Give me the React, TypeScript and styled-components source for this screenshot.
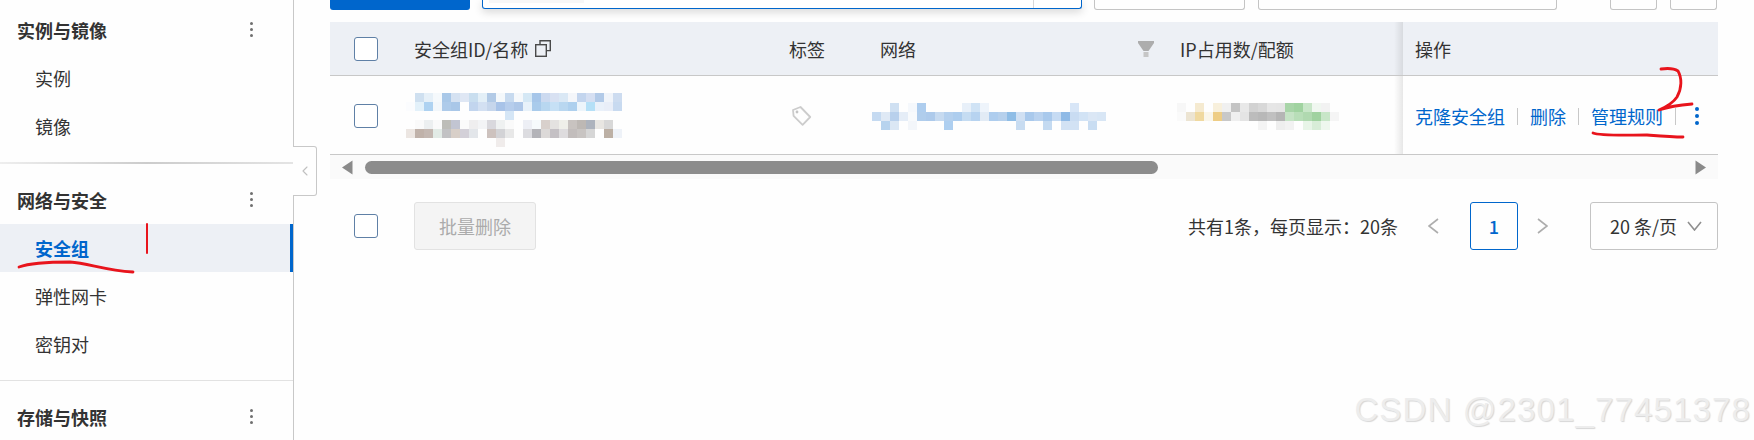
import React from 'react';
import styled, { createGlobalStyle } from 'styled-components';
import { ChevronLeft } from 'lucide-react';

const BLUE = '#0066cc';
const TEXT = '#333333';

const GlobalStyle = createGlobalStyle`
  html, body {
    margin: 0;
    background: #fefefe;
    overflow: hidden;
  }
  * {
    box-sizing: border-box;
  }
`;

// pixelated (blurred out) values, one string per row of 9px cells
const ID_CELLS = [
  '- cfe0f0 e6f0f8 f5f9fc a9c8e8 d5e2f2 dfe7f4 c9deef e3eff7 b2cae6 f4f8fb c7daef f5f8fb d5e8f5 a6c6e9 ccdaf0 d8e1f2 dae8f5 f4f6fa c3d5ee d5dff2 b2cae8 f0f4fa cddcf0',
  'fbfcfe e3f1fa aed2f1 f2f7fb aecbea a9c7e8 - c2d5ee d3e0f2 c6d6ec a8c3e8 b6cdec aec7e8 e8f2fa a9cbeb b8d7f0 c6e0f5 b9d7f0 aed0ee edf5fb b5e0f7 eaf1fa e9eef8 c8daf0',
  '- - - - - - - - - - - d5e6f6',
  '- fafafa eceff0 fafafa bdbdb8 c2c5d2 fbfbfb efeeef f3f4f6 d9d8dd eff1f1 fafafa - edeff5 f6fafc d8d0cc e4e2e0 efefe9 c8c3c0 bdb8b4 adb3bd e8e6e2 d8d8d8',
  'ece6e2 c0b2aa c4b8b2 e2ebe6 c2c2c4 d8cfc8 d3d0d8 e3e6ea - cdc2be d3d3d6 e8e8e8 - dcdce0 b3b3b8 dcd9d8 c4c0c4 dedcde c2bdbc c8c4c2 d6d6d6 - bcb0a5 eef2f8',
  '- - - - - - - - - - f0eceb',
];

const NET_CELLS = [
  '- - cfe0f2 - f5f8fc aecdee - - - - e8f0f9 d0e3f5 eef4fb - - - - - - - - - d8e6f7',
  'c5daf1 dfe9f5 b8d0ec e5edf7 f8fafc b0cdec adcaeb c6daf0 b4d0ee adcdee c5dcf2 b7d3f0 e2ebf5 aecdee b6d0ec 8fbde6 d0e0f3 a9c9ec b9d2ef a9c9ec c6dbf3 8fbae6 c9dcf2 d2e3f5 dbe7f5 d8e6f5',
  '- b7d3ee dbe7f4 - f3f6fa - - - aecff0 - - - - - - - c8dcf1 - - c4daf1 - d2e2f4 d2e2f4 - c9ddf2',
];

const IP_CELLS = [
  'f7f7f7 - f5ead0 - f8f0dc f0f0f0 c4c4c4 e8e8e8 d2d2d2 d8d8d8 e6e6e6 e5e5e5 a8d5a8 a0d3a0 c8e6c8 f0f7f0 f2f2f2',
  'fafafa ece4d2 f0d9a0 faf6ea eecd85 c8c8c8 efefef e4e4e4 bcbcbc b8b8b8 c0c0c0 b5b5b5 c5e3c5 b8deb8 b0d9b0 a0d2a0 c8e6c8 f5f5f5',
  '- - - - - - - - - f4f4f4 - eeeeee f2f2f2 - e8f5e8 d8edd8 eef7ee',
];

const Mosaic = ({ rows }: { rows: string[] }) => {
  const grid = rows.map((row) => row.split(' '));
  const cols = Math.max(...grid.map((row) => row.length));
  return (
    <MosaicSvg width={cols * 9} height={grid.length * 9}>
      {grid.map((row, y) =>
        row.map((cell, x) =>
          cell === '-' ? null : (
            <rect key={`${x}-${y}`} x={x * 9} y={y * 9} width={9} height={9} fill={`#${cell}`} />
          ),
        ),
      )}
    </MosaicSvg>
  );
};

const MoreDots = ({ blue }: { blue?: boolean }) => (
  <DotsColumn $blue={blue}>
    <i />
    <i />
    <i />
  </DotsColumn>
);

const CopyIcon = () => (
  <HeaderIcon width="16" height="17" viewBox="0 0 16 17" fill="none" stroke="#4a4a4a" strokeWidth="1.4">
    <rect x="0.7" y="4.7" width="10.6" height="11.6" />
    <path d="M5 4.4V0.7H15.3V10.6H11.6" />
  </HeaderIcon>
);

const FilterIcon = () => (
  <FilterSvg width="16" height="16" viewBox="0 0 16 16">
    <path d="M0 0H16V2L10.5 10H5.5L0 2Z" fill="#adadad" />
    <rect x="5.5" y="11" width="5" height="5" fill="#c6c6c6" />
  </FilterSvg>
);

const TagIcon = () => (
  <svg width="20" height="20" viewBox="0 0 20 20" fill="none" stroke="#cccccc" strokeWidth="1.8" strokeLinejoin="round">
    <path d="M1 4L8.5 1L18.2 11L10.6 18.8L1.6 9.8Z" />
    <circle cx="5" cy="6" r="1.4" fill="#c4c4c4" stroke="none" />
  </svg>
);

const Triangle = ({ right }: { right?: boolean }) => (
  <svg width="11" height="15" viewBox="0 0 11 15" fill="#8a8a8a">
    <path d={right ? 'M0.5 0.5L11 7.5L0.5 14.5Z' : 'M10.5 0.5L0 7.5L10.5 14.5Z'} />
  </svg>
);

const PagerChevron = ({ right }: { right?: boolean }) => (
  <svg width="11" height="16" viewBox="0 0 11 16" fill="none" stroke="#adadad" strokeWidth="1.6">
    <path d={right ? 'M1 1L10 8L1 15' : 'M10 1L1 8L10 15'} />
  </svg>
);

const SelectChevron = () => (
  <svg width="15" height="10" viewBox="0 0 15 10" fill="none" stroke="#8f8f8f" strokeWidth="1.6">
    <path d="M1 1L7.5 9L14 1" />
  </svg>
);

const NAV_TOP = ['实例', '镜像'];
const NAV_NET = ['安全组', '弹性网卡', '密钥对'];

export default function App() {
  return (
    <Page>
      <GlobalStyle />
      <Sidebar>
        <NavTitle>
          实例与镜像
          <MoreDots />
        </NavTitle>
        {NAV_TOP.map((item) => (
          <NavItem key={item}>{item}</NavItem>
        ))}
        <NavDivider $strong />
        <NavTitle>
          网络与安全
          <MoreDots />
        </NavTitle>
        {NAV_NET.map((item) => (
          <NavItem key={item} $active={item === '安全组'}>
            {item}
          </NavItem>
        ))}
        <NavDivider />
        <NavTitle>
          存储与快照
          <MoreDots />
        </NavTitle>
        <CollapseTab>
          <ChevronLeft size={16} color="#c0c0c0" strokeWidth={1.6} />
        </CollapseTab>
      </Sidebar>

      <Main>
        <Toolbar>
          <PrimaryButton />
          <SearchBox>
            <SearchHint />
            <SearchAddon />
          </SearchBox>
          <ToolBox $width={151} />
          <ToolBox $width={299} $gap={13} />
          <ToolBox $width={47} $gap={53} />
          <ToolBox $width={47} $gap={13} />
        </Toolbar>

        <Table>
          <HeaderRow>
            <CheckCell>
              <Checkbox />
            </CheckCell>
            <IdCell>
              安全组ID/名称
              <CopyIcon />
            </IdCell>
            <TagCell>标签</TagCell>
            <NetCell>
              网络
              <FilterIcon />
            </NetCell>
            <IpCell>IP占用数/配额</IpCell>
            <OpsCell $head>操作</OpsCell>
          </HeaderRow>
          <BodyRow>
            <CheckCell>
              <Checkbox />
            </CheckCell>
            <IdCell $mosaic>
              <Mosaic rows={ID_CELLS} />
            </IdCell>
            <TagCell>
              <TagNudge>
                <TagIcon />
              </TagNudge>
            </TagCell>
            <NetCell $mosaic>
              <Mosaic rows={NET_CELLS} />
            </NetCell>
            <IpCell $mosaic>
              <Mosaic rows={IP_CELLS} />
            </IpCell>
            <OpsCell>
              <ActionLink>克隆安全组</ActionLink>
              <ActionSep />
              <ActionLink>删除</ActionLink>
              <ActionSep />
              <ActionLink>管理规则</ActionLink>
              <ActionSep />
              <MoreDots blue />
            </OpsCell>
          </BodyRow>
          <ScrollTrack>
            <Triangle />
            <ScrollThumb />
            <Triangle right />
          </ScrollTrack>
        </Table>

        <Pager>
          <PagerCheck>
            <Checkbox />
          </PagerCheck>
          <BatchButton>批量删除</BatchButton>
          <PagerTotal>共有1条，每页显示：20条</PagerTotal>
          <PagerArrow $left={30} $right={31}>
            <PagerChevron />
          </PagerArrow>
          <PageBox>1</PageBox>
          <PagerArrow $left={19} $right={42}>
            <PagerChevron right />
          </PagerArrow>
          <SizeSelect>
            20 条/页
            <SelectChevron />
          </SizeSelect>
        </Pager>
      </Main>

      <InkLayer width="1754" height="440" fill="none" stroke="#e8141c" strokeWidth="2.8" strokeLinecap="round" strokeLinejoin="round">
        <path d="M19 267C30 263 48 262 70 262C88 263 104 270 133 272" />
        <path d="M147 224L147 253" strokeWidth="2" />
        <path d="M1661 69C1668 68 1675 69 1678 71C1682 78 1682 88 1677 97C1673 103 1666 107 1659 110C1668 107 1680 105 1692 104" />
        <path d="M1593 133C1600 136 1625 135 1647 135C1660 136 1672 137 1683 137" />
      </InkLayer>

      <Watermark>CSDN @2301_77451378</Watermark>
    </Page>
  );
}

const Page = styled.div`
  position: relative;
  display: flex;
  width: 1754px;
  height: 440px;
  overflow: hidden;
  font-family: 'Noto Sans CJK SC', 'Liberation Sans', sans-serif;
  font-size: 18px;
  color: ${TEXT};
  background: #fefefe;
`;

const Sidebar = styled.aside`
  position: relative;
  flex: none;
  width: 294px;
  height: 440px;
  padding-top: 7px;
  border-right: 1px solid #c8c8c8;
`;

const NavTitle = styled.div`
  display: flex;
  align-items: center;
  justify-content: space-between;
  height: 47px;
  padding: 0 40px 2px 17px;
  font-weight: 700;
`;

const NavItem = styled.div<{ $active?: boolean }>`
  display: flex;
  align-items: center;
  height: 48px;
  padding-left: 35px;
  ${(p) =>
    p.$active
      ? `
    color: ${BLUE};
    font-weight: 700;
    background: #edf0f5;
    border-right: 3px solid ${BLUE};
  `
      : ''}
`;

const NavDivider = styled.div<{ $strong?: boolean }>`
  height: ${(p) => (p.$strong ? 2 : 1)}px;
  margin: 12px 0 13px;
  background: ${(p) =>
    p.$strong ? 'linear-gradient(90deg, #eeeeee, #cccccc 50%, #e4e4e4)' : '#e2e2e2'};
`;

const CollapseTab = styled.div`
  position: absolute;
  top: 146px;
  left: 293px;
  display: flex;
  align-items: center;
  justify-content: center;
  width: 24px;
  height: 50px;
  background: #fefefe;
  border: 1px solid #c8c8c8;
  border-left: none;
  border-radius: 0 3px 3px 0;
`;

const DotsColumn = styled.span<{ $blue?: boolean }>`
  display: inline-flex;
  flex-direction: column;
  gap: ${(p) => (p.$blue ? 3 : 2.5)}px;
  margin-left: ${(p) => (p.$blue ? 7 : 0)}px;

  i {
    display: block;
    width: ${(p) => (p.$blue ? 4 : 3.5)}px;
    height: ${(p) => (p.$blue ? 4 : 3.5)}px;
    border-radius: 50%;
    background: ${(p) => (p.$blue ? BLUE : '#707070')};
  }
`;

const Main = styled.main`
  flex: 1;
  min-width: 0;
  padding: 0 36px;
`;

const Toolbar = styled.div`
  display: flex;
  align-items: flex-start;
  gap: 12px;
  height: 22px;
`;

const PrimaryButton = styled.div`
  width: 140px;
  height: 10px;
  background: ${BLUE};
  border-radius: 0 0 3px 3px;
`;

const SearchBox = styled.div`
  display: flex;
  justify-content: space-between;
  width: 600px;
  height: 9px;
  background: #fff;
  border: 1px solid ${BLUE};
  border-top: none;
  border-radius: 0 0 3px 3px;
  box-shadow: 0 3px 8px rgba(0, 0, 0, 0.16);
`;

const SearchHint = styled.div`
  width: 95px;
  height: 3px;
  margin-left: 6px;
  background: #f7f7f7;
`;

const SearchAddon = styled.div`
  width: 48px;
  border-left: 1px solid #d8d8d8;
`;

const ToolBox = styled.div<{ $width: number; $gap?: number }>`
  width: ${(p) => p.$width}px;
  height: 10px;
  margin-left: ${(p) => (p.$gap ? p.$gap - 12 : 0)}px;
  border: 1px solid #c4c4c4;
  border-top: none;
  border-radius: 0 0 3px 3px;
`;

const Table = styled.div`
  width: 1388px;
`;

const HeaderRow = styled.div`
  display: flex;
  height: 54px;
  background: #edf0f5;
  border-bottom: 1px solid #c8c8c8;
`;

const BodyRow = styled.div`
  display: flex;
  height: 79px;
  padding-top: 2px;
  border-bottom: 1px solid #c8c8c8;
`;

const Cell = styled.div`
  display: flex;
  align-items: center;
  flex: none;
  white-space: nowrap;
`;

const CheckCell = styled(Cell)`
  width: 76px;
  padding-left: 24px;
`;

const IdCell = styled(Cell)<{ $mosaic?: boolean }>`
  width: 383px;
  padding-left: ${(p) => (p.$mosaic ? 0 : 8)}px;
  padding-top: ${(p) => (p.$mosaic ? 8 : 0)}px;
`;

const TagCell = styled(Cell)`
  width: 91px;
`;

const TagNudge = styled.span`
  display: flex;
  margin-left: 3px;
`;

// the pixelated value starts a little left of the column title
const NetCell = styled(Cell)<{ $mosaic?: boolean }>`
  width: 300px;
  margin: 0 ${(p) => (p.$mosaic ? 8 : 0)}px 0 ${(p) => (p.$mosaic ? -8 : 0)}px;
  padding-right: ${(p) => (p.$mosaic ? 0 : 26)}px;
  justify-content: ${(p) => (p.$mosaic ? 'flex-start' : 'space-between')};
`;

const IpCell = styled(Cell)<{ $mosaic?: boolean }>`
  width: 223px;
  margin: 0 ${(p) => (p.$mosaic ? 3 : 0)}px 0 ${(p) => (p.$mosaic ? -3 : 0)}px;
`;

const OpsCell = styled(Cell)<{ $head?: boolean }>`
  position: relative;
  width: 315px;
  padding-left: 12px;
  background: ${(p) => (p.$head ? '#edf0f5' : '#fefefe')};

  &::before {
    content: '';
    position: absolute;
    top: ${(p) => (p.$head ? 0 : -2)}px;
    bottom: 0;
    left: -9px;
    width: 9px;
    background: linear-gradient(90deg, rgba(0, 0, 0, 0), rgba(0, 0, 0, 0.09));
  }
`;

const ActionLink = styled.a`
  color: ${BLUE};
  cursor: pointer;
`;

const ActionSep = styled.span`
  width: 1px;
  height: 17px;
  margin: 0 12px;
  background: #c8c8c8;
`;

const MosaicSvg = styled.svg`
  display: block;
  flex: none;
`;

const HeaderIcon = styled.svg`
  margin-left: 7px;
`;

const FilterSvg = styled.svg`
  flex: none;
`;

const ScrollTrack = styled.div`
  display: flex;
  align-items: center;
  justify-content: space-between;
  height: 24px;
  padding: 0 12px;
  background: #fafafa;
`;

const ScrollThumb = styled.div`
  width: 793px;
  height: 13px;
  margin-right: auto;
  margin-left: 12px;
  background: #8c8c8c;
  border-radius: 7px;
`;

const Checkbox = styled.span`
  display: block;
  flex: none;
  width: 24px;
  height: 24px;
  background: #fff;
  border: 1px solid #5f80a6;
  border-radius: 3px;
`;

const Pager = styled.div`
  display: flex;
  align-items: center;
  width: 1388px;
  height: 48px;
  margin-top: 23px;
`;

const PagerCheck = styled.div`
  width: 84px;
  padding-left: 24px;
`;

const BatchButton = styled.div`
  display: flex;
  align-items: center;
  justify-content: center;
  width: 122px;
  height: 48px;
  color: #ababab;
  background: #f4f4f4;
  border: 1px solid #e2e2e2;
  border-radius: 3px;
`;

const PagerTotal = styled.div`
  margin-left: auto;
`;

const PagerArrow = styled.span<{ $left: number; $right: number }>`
  display: flex;
  margin: 0 ${(p) => p.$right}px 0 ${(p) => p.$left}px;
`;

const PageBox = styled.div`
  display: flex;
  align-items: center;
  justify-content: center;
  width: 48px;
  height: 48px;
  color: ${BLUE};
  font-weight: 500;
  border: 1px solid ${BLUE};
  border-radius: 3px;
`;

const SizeSelect = styled.div`
  display: flex;
  align-items: center;
  gap: 10px;
  width: 128px;
  height: 48px;
  padding-left: 19px;
  border: 1px solid #c4c4c4;
  border-radius: 3px;
`;

const InkLayer = styled.svg`
  position: absolute;
  top: 0;
  left: 0;
  pointer-events: none;
`;

const Watermark = styled.div`
  position: absolute;
  top: 390px;
  right: 3px;
  font-family: 'Liberation Sans', Arial, sans-serif;
  font-size: 33px;
  line-height: 40px;
  letter-spacing: 1.15px;
  white-space: nowrap;
  color: #ededed;
  text-shadow: 1px 1px 1px #d6d6d6;
`;
